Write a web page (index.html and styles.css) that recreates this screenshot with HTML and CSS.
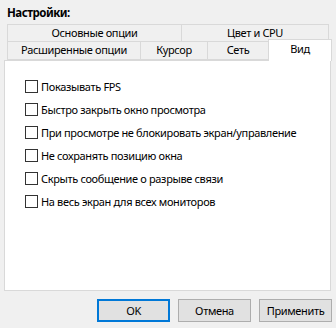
FILE: index.html
```html
<!DOCTYPE html>
<html lang="ru">
<head>
  <meta charset="UTF-8">
  <title>Настройки</title>
  <link rel="stylesheet" href="styles.css">
</head>
<body>
  <div class="title">Настройки:</div>

  <div class="tabs">
    <div class="tab-row">
      <div class="tab w-main">Основные опции</div>
      <div class="tab w-color">Цвет и CPU</div>
    </div>
    <div class="tab-row second">
      <div class="tab w-adv">Расширенные опции</div>
      <div class="tab w-cursor">Курсор</div>
      <div class="tab w-net">Сеть</div>
      <div class="tab active">Вид</div>
    </div>
  </div>

  <div class="panel">
    <label class="check"><span class="box"></span>Показывать FPS</label>
    <label class="check"><span class="box"></span>Быстро закрыть окно просмотра</label>
    <label class="check"><span class="box"></span>При просмотре не блокировать экран/управление</label>
    <label class="check"><span class="box"></span>Не сохранять позицию окна</label>
    <label class="check"><span class="box"></span>Скрыть сообщение о разрыве связи</label>
    <label class="check"><span class="box"></span>На весь экран для всех мониторов</label>
  </div>

  <div class="buttons">
    <button class="btn default">OK</button>
    <button class="btn">Отмена</button>
    <button class="btn">Применить</button>
  </div>
</body>
</html>
```

FILE: styles.css
```css
body {
  margin: 0;
  padding: 0;
  background: #f0f0f0;
  font-family: "Noto Sans", sans-serif;
  font-size: 11px;
  letter-spacing: -0.35px;
  color: #000000;
  width: 336px;
  height: 328px;
  overflow: hidden;
}

.title {
  font-weight: bold;
  font-size: 11.5px;
  letter-spacing: -0.5px;
  padding: 4px 0 0 7px;
  height: 20px;
  line-height: 17px;
}

.tabs {
  position: relative;
  z-index: 1;
  padding-left: 7px;
  height: 36px;
}

.tab-row {
  display: flex;
  height: 18px;
}

.tab-row.second {
  margin-top: -1px;
  height: 19px;
}

.tab {
  box-sizing: border-box;
  border: 1px solid #d9d9d9;
  margin-right: -1px;
  text-align: center;
  line-height: 16px;
  background: #f0f0f0;
}

.w-main { width: 175px; }
.w-color { width: 148px; }
.w-adv { width: 134px; }
.w-cursor { width: 68px; }
.w-net { width: 62px; }

.tab.active {
  width: 64px;
  height: 22px;
  margin-top: -2px;
  background: #ffffff;
  border-bottom: none;
  line-height: 17px;
}

.panel {
  box-sizing: border-box;
  margin: 0 5px 0 4px;
  width: 327px;
  height: 231px;
  background: #ffffff;
  border: 1px solid #d9d9d9;
  padding: 14px 0 0 20px;
}

.check {
  display: flex;
  align-items: center;
  height: 23px;
  white-space: nowrap;
}

.box {
  flex-shrink: 0;
  box-sizing: border-box;
  width: 13px;
  height: 13px;
  border: 1px solid #333333;
  background: #ffffff;
  margin-right: 3px;
}

.buttons {
  display: flex;
  justify-content: flex-end;
  gap: 8px;
  padding: 8px 4px 0 0;
}

.btn {
  box-sizing: border-box;
  width: 73px;
  height: 23px;
  background: #e1e1e1;
  border: 1px solid #adadad;
  font-family: "Noto Sans", sans-serif;
  font-size: 11px;
  letter-spacing: -0.35px;
  color: #000000;
  padding: 0;
}

.btn.default {
  border: 2px solid #0078d7;
}
```
